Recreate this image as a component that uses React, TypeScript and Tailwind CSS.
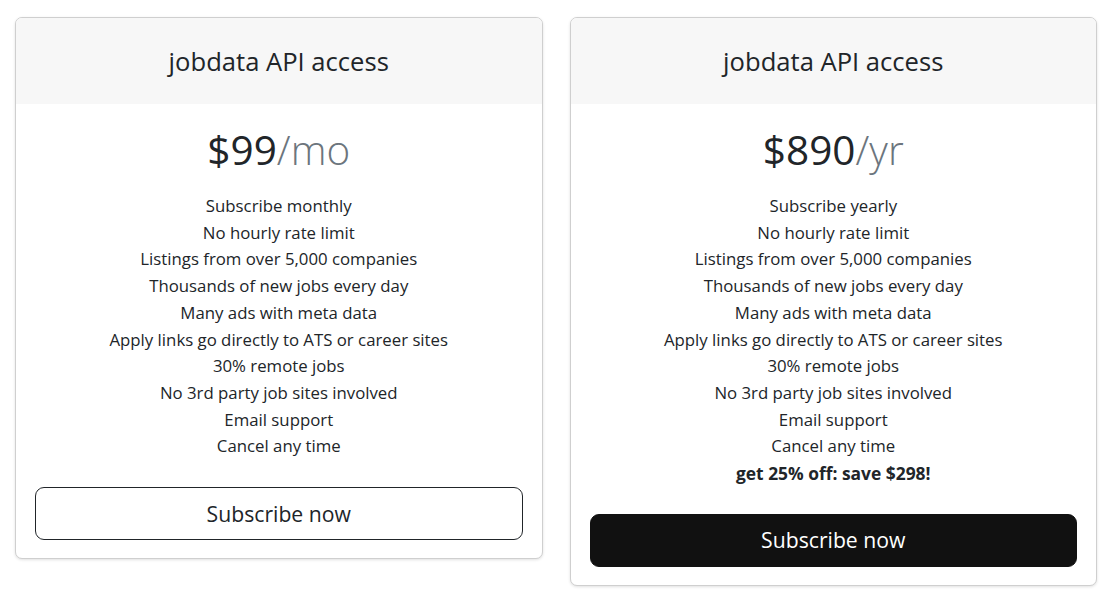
import React from "react";

const features = [
  "No hourly rate limit",
  "Listings from over 5,000 companies",
  "Thousands of new jobs every day",
  "Many ads with meta data",
  "Apply links go directly to ATS or career sites",
  "30% remote jobs",
  "No 3rd party job sites involved",
  "Email support",
  "Cancel any time",
];

function Card({
  price,
  period,
  first,
  extra,
  dark,
}: {
  price: string;
  period: string;
  first: string;
  extra?: string;
  dark?: boolean;
}) {
  return (
    <div className="rounded-[7px] border border-[#cfcfcf] bg-white shadow-[0_1px_3px_rgba(0,0,0,0.12)] overflow-hidden">
      <div className="h-[86px] bg-[#f7f7f7] flex items-center justify-center pt-[2px]">
        <h4 className="text-[25.6px] leading-[32px] text-[#212529] font-normal">jobdata API access</h4>
      </div>
      <div className="px-[19px] pt-[19px] pb-[18px] flex flex-col items-center">
        <div className="text-[40.5px] leading-[53px] text-[#212529] mb-[17px]">
          {price}
          <span className="text-[#6c757d] font-light">{period}</span>
        </div>
        <ul className="text-center text-[16.8px] leading-[26.7px] text-[#212529] mb-[27px]">
          <li>{first}</li>
          {features.map((f) => (
            <li key={f}>{f}</li>
          ))}
          {extra && <li className="font-bold text-[17.4px]">{extra}</li>}
        </ul>
        {dark ? (
          <button className="w-full h-[53px] rounded-[9px] bg-[#111111] border border-[#111111] text-white text-[21.2px]">
            Subscribe now
          </button>
        ) : (
          <button className="w-full h-[53px] rounded-[9px] bg-white border border-[#212529] text-[#212529] text-[21.2px]">
            Subscribe now
          </button>
        )}
      </div>
    </div>
  );
}

export default function App() {
  return (
    <div
      className="bg-white w-[1108px] h-[597px] pt-[17px] pl-[15px] pr-[11px] grid grid-cols-2 gap-[27px] items-start"
      style={{ fontFamily: '"Segoe UI", "Open Sans", "Noto Sans", sans-serif' }}
    >
      <Card price="$99" period="/mo" first="Subscribe monthly" />
      <Card
        price="$890"
        period="/yr"
        first="Subscribe yearly"
        extra="get 25% off: save $298!"
        dark
      />
    </div>
  );
}
